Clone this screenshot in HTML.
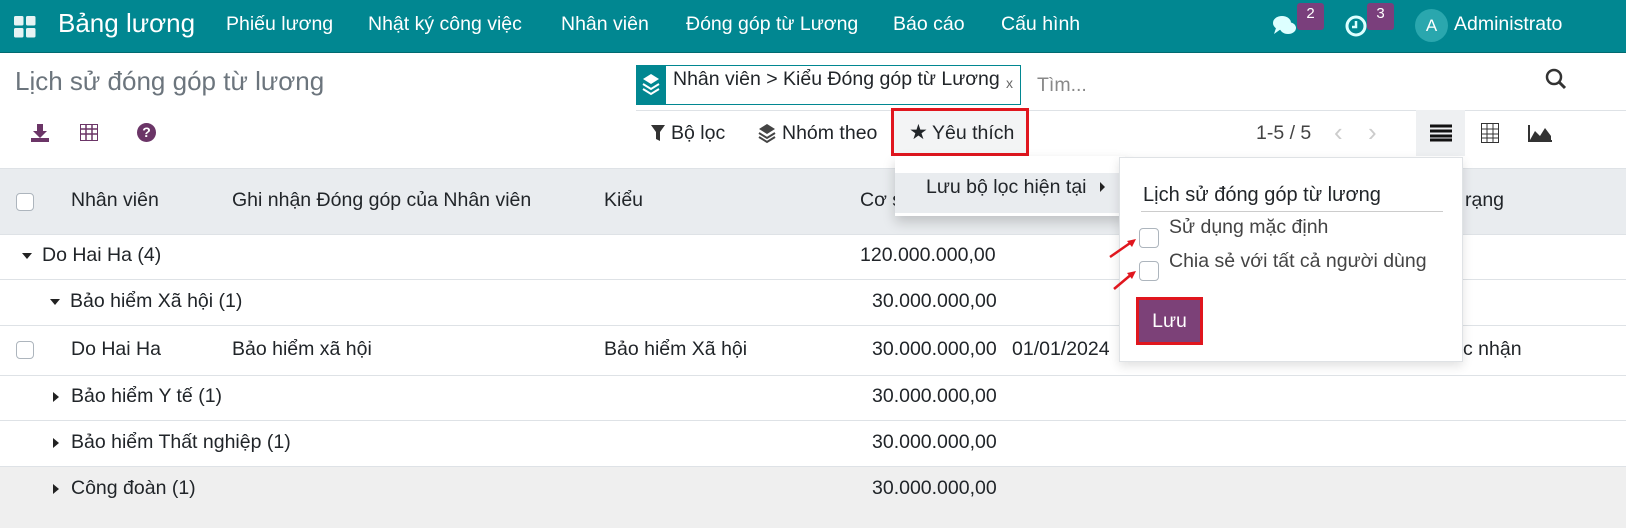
<!DOCTYPE html><html><head><meta charset="utf-8"><style>
*{box-sizing:border-box;margin:0;padding:0}
body{width:1626px;height:528px;overflow:hidden;background:#fff;font-family:"Liberation Sans",sans-serif;color:#212529;font-size:19.5px;position:relative}
.a{position:absolute;white-space:nowrap}
.nav{position:absolute;left:0;top:0;width:1626px;height:53px;background:#018791;border-bottom:1px solid #016a70;color:#fff}
.nav .a{top:13px;font-size:19.5px}
.row{position:absolute;left:0;width:1626px;border-top:1px solid #dee2e6}
.cb{position:absolute;width:18px;height:18px;border:1px solid #adb5bd;border-radius:4px;background:#fff}
.tri{display:inline-block;width:0;height:0;border-left:5px solid transparent;border-right:5px solid transparent;border-top:6px solid #222;margin-right:10px;vertical-align:middle}
.trir{display:inline-block;width:0;height:0;border-top:5px solid transparent;border-bottom:5px solid transparent;border-left:6px solid #222;margin-right:12px;vertical-align:middle}
</style></head><body>
<div class="nav">
<svg class="a" style="left:14px;top:16px" width="22" height="22"><rect x="0" y="0" width="9.5" height="9.5" rx="1.5" fill="#e6f3f4"/><rect x="12" y="0" width="9.5" height="9.5" rx="1.5" fill="#e6f3f4"/><rect x="0" y="12" width="9.5" height="9.5" rx="1.5" fill="#e6f3f4"/><rect x="12" y="12" width="9.5" height="9.5" rx="1.5" fill="#e6f3f4"/></svg>
<div class="a" style="left:58px;top:8px;font-size:26px">Bảng lương</div>
<div class="a" style="left:226px">Phiếu lương</div>
<div class="a" style="left:368px">Nhật ký công việc</div>
<div class="a" style="left:561px">Nhân viên</div>
<div class="a" style="left:686px">Đóng góp từ Lương</div>
<div class="a" style="left:893px">Báo cáo</div>
<div class="a" style="left:1001px">Cấu hình</div>
<svg class="a" style="left:1272px;top:14px" width="26" height="24"><ellipse cx="10" cy="9" rx="9" ry="7" fill="#dff"/><ellipse cx="16" cy="14" rx="8" ry="6" fill="#dff"/><path d="M4 14 L2 20 L9 15Z" fill="#dff"/></svg>
<div class="a" style="left:1297px;top:3px;width:27px;height:27px;background:#7a3f7c;border-radius:3px;font-size:15px;text-align:center;line-height:22px">2</div>
<svg class="a" style="left:1344px;top:14px" width="24" height="24"><circle cx="12" cy="12" r="9" fill="none" stroke="#dff" stroke-width="3"/><path d="M12 7v6h-4" stroke="#dff" stroke-width="2.5" fill="none"/></svg>
<div class="a" style="left:1367px;top:3px;width:27px;height:27px;background:#7a3f7c;border-radius:3px;font-size:15px;text-align:center;line-height:22px">3</div>
<div class="a" style="left:1415px;top:9px;width:33px;height:33px;border-radius:50%;background:#2aa7ae;text-align:center;line-height:33px;font-size:17px">A</div>
<div class="a" style="left:1454px">Administrato</div>
</div>
<div class="a" style="left:15px;top:66px;font-size:26px;color:#6c757d">Lịch sử đóng góp từ lương</div>
<div class="a" style="left:636px;top:65px;width:385px;height:40px;border:1px solid #018791"></div>
<div class="a" style="left:636px;top:65px;width:30px;height:40px;background:#018791"></div>
<svg class="a" style="left:641px;top:72px" width="20" height="26"><path d="M10 2 L18 7 L10 12 L2 7Z" fill="#fff"/><path d="M2 12 L10 17 L18 12 M2 17 L10 22 L18 17" stroke="#fff" stroke-width="2" fill="none"/></svg>
<div class="a" style="left:673px;top:68px">Nhân viên &gt; Kiểu Đóng góp từ Lương</div>
<div class="a" style="left:1006px;top:75px;font-size:14px;color:#666">x</div>
<div class="a" style="left:1037px;top:74px;color:#888">Tìm...</div>
<svg class="a" style="left:1545px;top:68px" width="22" height="22"><circle cx="9" cy="9" r="7" fill="none" stroke="#333" stroke-width="2.5"/><path d="M14 14l6 6" stroke="#333" stroke-width="3"/></svg>
<div class="a" style="left:636px;top:110px;width:990px;height:1px;background:#dee2e6"></div>
<svg class="a" style="left:30px;top:123px" width="20" height="20"><path d="M7 1h6v7h4l-7 7-7-7h4z" fill="#6b3567"/><rect x="1" y="15" width="18" height="4" fill="#6b3567"/></svg>
<svg class="a" style="left:80px;top:124px" width="18" height="17"><rect x="0.5" y="0.5" width="17" height="16" fill="none" stroke="#6b3567"/><path d="M0 5h18M0 10h18M6 0v17M12 0v17" stroke="#6b3567" stroke-width="1.5"/></svg>
<div class="a" style="left:137px;top:123px;width:19px;height:19px;border-radius:50%;background:#6b3567;color:#fff;font-weight:bold;font-size:14px;text-align:center;line-height:19px">?</div>
<svg class="a" style="left:651px;top:124px" width="14" height="18"><path d="M0 1h14L9 8v9L5 15V8z" fill="#333"/></svg>
<div class="a" style="left:671px;top:122px">Bộ lọc</div>
<svg class="a" style="left:757px;top:122px" width="20" height="22"><path d="M10 2 L18 7 L10 12 L2 7Z" fill="#444"/><path d="M2 11 L10 16 L18 11 M2 15 L10 20 L18 15" stroke="#444" stroke-width="2" fill="none"/></svg>
<div class="a" style="left:782px;top:122px">Nhóm theo</div>
<div class="a" style="left:891px;top:108px;width:138px;height:48px;background:#f3f4f5;border:3px solid #e0161e"></div>
<div class="a" style="left:909px;top:120px;font-size:21px">★</div>
<div class="a" style="left:932px;top:122px">Yêu thích</div>
<div class="a" style="left:1256px;top:122px;color:#444">1-5 / 5</div>
<div class="a" style="left:1334px;top:117px;font-size:26px;color:#ccc">‹</div>
<div class="a" style="left:1368px;top:117px;font-size:26px;color:#ccc">›</div>
<div class="a" style="left:1416px;top:110px;width:49px;height:46px;background:#eef0f2"></div>
<svg class="a" style="left:1430px;top:124px" width="22" height="18"><path d="M0 2h22M0 7h22M0 12h22M0 16h22" stroke="#111" stroke-width="3"/></svg>
<svg class="a" style="left:1481px;top:123px" width="18" height="20"><rect x="0.5" y="0.5" width="17" height="19" fill="none" stroke="#333"/><path d="M0 6h18M0 11h18M0 15h18M6 0v20M12 0v20" stroke="#333"/></svg>
<svg class="a" style="left:1528px;top:125px" width="24" height="17"><path d="M1 0v16h23" stroke="#333" stroke-width="2" fill="none"/><path d="M2 15L7 6l5 5 5-8 6 8v4z" fill="#333"/></svg>
<div class="a" style="left:0;top:168px;width:1626px;height:66px;background:#e9ecef;border-top:1px solid #dee2e6"></div>
<div class="cb" style="left:16px;top:193px"></div>
<div class="a" style="left:71px;top:189px">Nhân viên</div>
<div class="a" style="left:232px;top:189px">Ghi nhận Đóng góp của Nhân viên</div>
<div class="a" style="left:604px;top:189px">Kiểu</div>
<div class="a" style="left:860px;top:189px">Cơ s</div>
<div class="a" style="left:1465px;top:189px">rạng</div>
<div class="row" style="top:234px;height:45px"></div>
<div class="a" style="left:22px;top:244px"><span class="tri"></span>Do Hai Ha (4)</div>
<div class="a" style="left:860px;top:244px">120.000.000,00</div>
<div class="row" style="top:279px"></div>
<div class="a" style="left:50px;top:290px"><span class="tri"></span>Bảo hiểm Xã hội (1)</div>
<div class="a" style="left:872px;top:290px">30.000.000,00</div>
<div class="row" style="top:325px"></div>
<div class="cb" style="left:16px;top:341px"></div>
<div class="a" style="left:71px;top:338px">Do Hai Ha</div>
<div class="a" style="left:232px;top:338px">Bảo hiểm xã hội</div>
<div class="a" style="left:604px;top:338px">Bảo hiểm Xã hội</div>
<div class="a" style="left:872px;top:338px">30.000.000,00</div>
<div class="a" style="left:1012px;top:338px">01/01/2024</div>
<div class="a" style="left:1463px;top:338px">c nhận</div>
<div class="row" style="top:375px"></div>
<div class="a" style="left:53px;top:385px"><span class="trir"></span>Bảo hiểm Y tế (1)</div>
<div class="a" style="left:872px;top:385px">30.000.000,00</div>
<div class="row" style="top:420px"></div>
<div class="a" style="left:53px;top:431px"><span class="trir"></span>Bảo hiểm Thất nghiệp (1)</div>
<div class="a" style="left:872px;top:431px">30.000.000,00</div>
<div class="row" style="top:466px;height:62px;background:#efefef"></div>
<div class="a" style="left:53px;top:477px"><span class="trir"></span>Công đoàn (1)</div>
<div class="a" style="left:872px;top:477px">30.000.000,00</div>
<div class="a" style="left:895px;top:156px;width:230px;height:60px;background:#fff;box-shadow:0 6px 12px rgba(0,0,0,.18)"></div>
<div class="a" style="left:895px;top:173px;width:225px;height:40px;background:#e9ecef"></div>
<div class="a" style="left:926px;top:176px">Lưu bộ lọc hiện tại</div>
<div class="a" style="left:1100px;top:182px;width:0;height:0;border-top:5px solid transparent;border-bottom:5px solid transparent;border-left:5px solid #222"></div>
<div class="a" style="left:1119px;top:157px;width:344px;height:205px;background:#fff;border:1px solid #dfe2e5;box-shadow:0 4px 10px rgba(0,0,0,.12)"></div>
<div class="a" style="left:1143px;top:184px;font-size:20px">Lịch sử đóng góp từ lương</div>
<div class="a" style="left:1141px;top:211px;width:302px;height:1px;background:#ccc"></div>
<div class="cb" style="left:1139px;top:228px;height:20px;width:20px"></div>
<div class="a" style="left:1169px;top:216px;color:#444">Sử dụng mặc định</div>
<div class="cb" style="left:1139px;top:261px;height:20px;width:20px"></div>
<div class="a" style="left:1169px;top:250px;color:#444">Chia sẻ với tất cả người dùng</div>
<svg class="a" style="left:1105px;top:233px" width="34" height="60"><path d="M5 24 L28 8" stroke="#e0161e" stroke-width="2.5"/><path d="M31 6 L22 8 L27 14Z" fill="#e0161e"/><path d="M9 56 L28 40" stroke="#e0161e" stroke-width="2.5"/><path d="M31 38 L22 40 L27 46Z" fill="#e0161e"/></svg>
<div class="a" style="left:1136px;top:297px;width:67px;height:48px;background:#7c4178;border:3px solid #e0161e;color:#fff;text-align:center;line-height:42px;font-size:19.5px">Lưu</div>
</body></html>
